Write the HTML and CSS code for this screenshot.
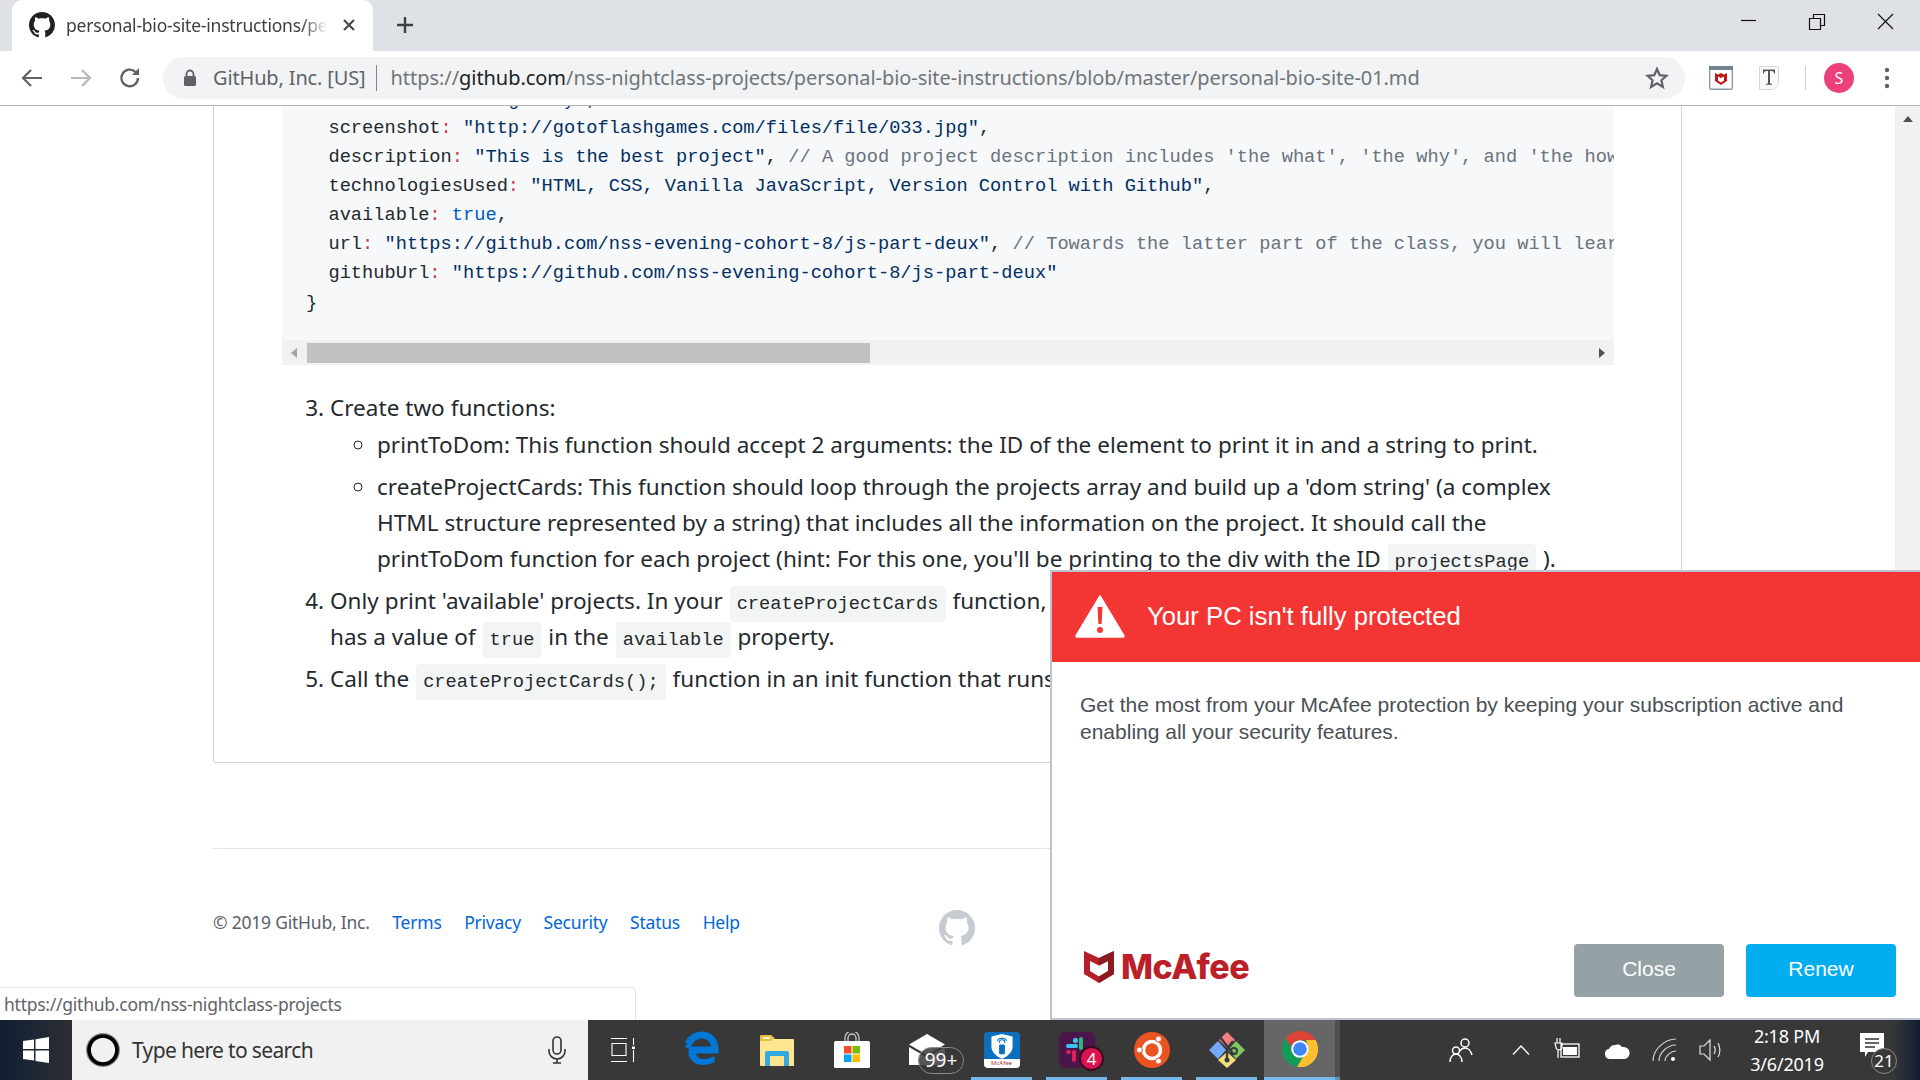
FILE: index.html
```html
<!DOCTYPE html>
<html lang="en">
<head>
<meta charset="utf-8">
<title>personal-bio-site-instructions</title>
<link rel="stylesheet" href="styles.css">
</head>
<body>
<svg class="defs" width="0" height="0">
  <symbol id="gh" viewBox="0 0 16 16"><path d="M8 0C3.58 0 0 3.58 0 8c0 3.54 2.29 6.53 5.47 7.59.4.07.55-.17.55-.38 0-.19-.01-.82-.01-1.49-2.01.37-2.53-.49-2.69-.94-.09-.23-.48-.94-.82-1.13-.28-.15-.68-.52-.01-.53.63-.01 1.08.58 1.23.82.72 1.21 1.87.87 2.33.66.07-.52.28-.87.51-1.07-1.78-.2-3.64-.89-3.64-3.95 0-.87.31-1.59.82-2.15-.08-.2-.36-1.02.08-2.12 0 0 .67-.21 2.2.82.64-.18 1.32-.27 2-.27.68 0 1.36.09 2 .27 1.53-1.04 2.2-.82 2.2-.82.44 1.1.16 1.92.08 2.12.51.56.82 1.27.82 2.15 0 3.07-1.87 3.75-3.65 3.95.29.25.54.73.54 1.48 0 1.07-.01 1.93-.01 2.2 0 .21.15.46.55.38A8.013 8.013 0 0 0 16 8c0-4.42-3.58-8-8-8z"/></symbol>
</svg>

<header class="tabstrip">
  <div class="tab">
    <svg class="tab-icon" width="26" height="26"><use href="#gh"/></svg>
    <span class="tab-title">personal-bio-site-instructions/personal-bio-site-01.md</span>
    <svg class="tab-close" width="14" height="14" viewBox="0 0 14 14"><path d="M2 2l10 10M12 2L2 12" stroke="#45494e" stroke-width="2.2"/></svg>
  </div>
  <svg class="newtab" width="20" height="20" viewBox="0 0 20 20"><path d="M10 2v16M2 10h16" stroke="#3c4043" stroke-width="2.4"/></svg>
  <div class="winctl">
    <svg width="68" height="50" viewBox="0 0 68 50"><path d="M25 20.500h15" stroke="#111" stroke-width="1.2"/></svg>
    <svg width="68" height="50" viewBox="0 0 68 50"><path d="M25.500 18.500h11v11h-11zM29.500 18.500v-4h11v11h-4" fill="none" stroke="#111" stroke-width="1.2"/></svg>
    <svg width="68" height="50" viewBox="0 0 68 50"><path d="M26 14l15 15M41 14L26 29" stroke="#111" stroke-width="1.2"/></svg>
  </div>
</header>

<nav class="toolbar">
  <svg class="tb-btn" width="24" height="24" viewBox="0 0 24 24"><path d="M22 12H4M11 4l-8 8 8 8" fill="none" stroke="#5f6368" stroke-width="2.2"/></svg>
  <svg class="tb-btn" width="24" height="24" viewBox="0 0 24 24"><path d="M2 12h18M13 4l8 8-8 8" fill="none" stroke="#b4b7bb" stroke-width="2.2"/></svg>
  <svg class="tb-btn" width="24" height="24" viewBox="0 0 24 24"><path d="M20 12a8.3 8.3 0 1 1-2.5-6" fill="none" stroke="#5f6368" stroke-width="2.3"/><path d="M21 2v7h-7z" fill="#5f6368"/></svg>
  <div class="omnibox">
    <svg class="lock" width="14" height="18" viewBox="0 0 14 18"><path d="M3.5 7V5a3.5 3.5 0 0 1 7 0v2" fill="none" stroke="#5f6368" stroke-width="1.8"/><rect x="1" y="7" width="12" height="10" rx="1.5" fill="#5f6368"/></svg>
    <span class="org">GitHub, Inc. [US]</span>
    <span class="omni-sep"></span>
    <span class="url">https://<b>github.com</b>/nss-nightclass-projects/personal-bio-site-instructions/blob/master/personal-bio-site-01.md</span>
    <svg class="star" width="24" height="24" viewBox="0 0 24 24"><path d="M12 3l2.7 6.2 6.8.6-5.1 4.5 1.5 6.6L12 17.4l-5.9 3.5 1.5-6.6-5.1-4.5 6.8-.6z" fill="none" stroke="#5f6368" stroke-width="2.2"/></svg>
  </div>
  <svg class="ext ext-m" width="24" height="24" viewBox="0 0 24 24"><rect x=".7" y=".7" width="22.6" height="22.6" rx="1.5" fill="#fff" stroke="#8a9aa5" stroke-width="1.4"/><rect x="0" y="0" width="24" height="4" fill="#71838f"/><path d="M6 7l3 1.6L12 7l3 1.6L18 7v8l-6 4-6-4z" fill="#c01818"/><path d="M9 10.5l3 1.5 3-1.5v4l-3 2-3-2z" fill="#fff"/></svg>
  <svg class="ext ext-t" width="20" height="24" viewBox="0 0 20 24"><path d="M.5.5h19v18l-5 5H.5z" fill="#fafafa" stroke="#d6d6d6"/><path d="M4 3.5h12v4h-1c0-1.6-1-2.4-3-2.4H11v12.2l2 .7v.8H7v-.8l2-.7V5.100H8C6 5.100 5 5.900 5 7.500H4z" fill="#555"/></svg>
  <span class="tb-sep"></span>
  <span class="avatar">S</span>
  <svg class="kebab" width="6" height="22" viewBox="0 0 6 22"><circle cx="3" cy="3" r="2.200" fill="#5f6368"/><circle cx="3" cy="11" r="2.200" fill="#5f6368"/><circle cx="3" cy="19" r="2.200" fill="#5f6368"/></svg>
</nav>

<div class="viewport">
  <main class="page">
    <article class="readme">
      <div class="code-wrap">
        <pre class="code"><span class="clip-line"><span class="clip-inner">  title<i class="p">:</i> <i class="s">"Cool Blog Body"</i>,</span></span>  screenshot<i class="p">:</i> <i class="s">"http://gotoflashgames.com/files/file/033.jpg"</i>,
  description<i class="p">:</i> <i class="s">"This is the best project"</i>, <i class="c">// A good project description includes 'the what', 'the why', and 'the how'</i>
  technologiesUsed<i class="p">:</i> <i class="s">"HTML, CSS, Vanilla JavaScript, Version Control with Github"</i>,
  available<i class="p">:</i> <i class="k">true</i>,
  url<i class="p">:</i> <i class="s">"https://github.com/nss-evening-cohort-8/js-part-deux"</i>, <i class="c">// Towards the latter part of the class, you will learn how to host</i>
  githubUrl<i class="p">:</i> <i class="s">"https://github.com/nss-evening-cohort-8/js-part-deux"</i>
}</pre>
        <div class="hscroll">
          <svg width="8" height="10" viewBox="0 0 8 10"><path d="M7 0v10L1 5z" fill="#a3a3a3"/></svg>
          <span class="hthumb"></span>
          <svg class="harrow-r" width="8" height="10" viewBox="0 0 8 10"><path d="M1 0v10l6-5z" fill="#505050"/></svg>
        </div>
      </div>
      <ol class="steps" start="3">
        <li>Create two functions:
          <ul>
            <li>printToDom: This function should accept 2 arguments: the ID of the element to print it in and a string to print.</li>
            <li>createProjectCards: This function should loop through the projects array and build up a 'dom string' (a complex<br>HTML structure represented by a string) that includes all the information on the project. It should call the<br>printToDom function for each project (hint: For this one, you'll be printing to the div with the ID <code>projectsPage</code> ).</li>
          </ul>
        </li>
        <li>Only print 'available' projects. In your <code>createProjectCards</code> function, only print a project if the project<br>has a value of <code>true</code> in the <code>available</code> property.</li>
        <li>Call the <code>createProjectCards();</code> function in an init function that runs when the page loads.</li>
      </ol>
    </article>
    <footer class="site-footer">
      <span class="copy">© 2019 GitHub, Inc.</span>
      <a>Terms</a><a>Privacy</a><a>Security</a><a>Status</a><a>Help</a>
      <svg class="foot-mark" width="36" height="36"><use href="#gh"/></svg>
    </footer>
  </main>
  <aside class="vscroll">
    <svg width="12" height="8" viewBox="0 0 12 8"><path d="M1 7l5-6 5 6z" fill="#505050"/></svg>
  </aside>
  <div class="status-bubble">https://github.com/nss-nightclass-projects</div>
</div>

<section class="popup">
  <div class="popup-head">
    <svg width="50" height="44" viewBox="0 0 50 44"><path d="M25 2L49 42a1 1 0 0 1-1 1H2a1 1 0 0 1-1-1z" fill="#fff" stroke="#fff" stroke-width="1.500" stroke-linejoin="round"/><path d="M22.500 13h5l-.9 17h-3.200z" fill="#f33633"/><circle cx="25" cy="36" r="3" fill="#f33633"/></svg>
    <h2>Your PC isn't fully protected</h2>
  </div>
  <p class="popup-body">Get the most from your McAfee protection by keeping your subscription active and<br>enabling all your security features.</p>
  <div class="popup-foot">
    <svg class="mc-shield" width="32" height="35" viewBox="0 0 32 35"><path d="M1 2l15 7 15-7v23L16 34 1 25z" fill="#b51f27"/><path d="M7 12l9 4.500 9-4.500v10l-9 5.500-9-5.500z" fill="#fff"/><path d="M16 9l15-7v23L16 34v-6.500l9-5.500V12l-9 4.500z" fill="#8c1a20"/></svg>
    <span class="mc-word">McAfee</span>
    <button class="btn btn-close">Close</button>
    <button class="btn btn-renew">Renew</button>
  </div>
</section>

<footer class="taskbar">
  <div class="start">
    <svg width="26" height="26" viewBox="0 0 26 26"><path d="M0 4l11-1.600V12H0zM12.500 2.200L26 0v12H12.500zM0 13.500h11v10L0 22zM12.500 13.500H26V26l-13.500-2z" fill="#fff"/></svg>
  </div>
  <div class="search">
    <svg width="36" height="36" viewBox="0 0 36 36"><circle cx="18" cy="18" r="14.500" fill="none" stroke="#8a8a8a" stroke-width="5"/><circle cx="18" cy="18" r="14" fill="none" stroke="#000" stroke-width="3.600"/></svg>
    <span class="search-text">Type here to search</span>
    <svg class="mic" width="18" height="28" viewBox="0 0 18 28"><rect x="5" y="1" width="8" height="17" rx="4" fill="none" stroke="#333" stroke-width="1.600"/><path d="M1 13v2a8 8 0 0 0 16 0v-2M9 23v4M5 27h8" fill="none" stroke="#333" stroke-width="1.600"/></svg>
  </div>
  <div class="tb-icons">
    <span class="tb-cell tb-task"><svg width="24" height="24" viewBox="0 0 24 24"><path d="M0 .5h16M0 23.500h16M1 5.500h14v12H1zM1 5.500M22.500 0v7M22.500 12v12" fill="none" stroke="#fff" stroke-width="1.100"/><rect x="21" y="8.500" width="3" height="2.500" fill="#fff"/></svg></span>
    <span class="tb-cell"><svg width="36" height="38" viewBox="0 0 36 38"><path d="M5 19h26C31 9 25 4 18 4 12 4 7 7 4 13" fill="none" stroke="#0078d7" stroke-width="7"/><path d="M4.500 19c-1 10 7 15 14 15 4 0 8-1 12-3v-6c-4 2-7 3-11 3-5 0-8-3-8-9z" fill="#0078d7"/><path d="M1 16c3-6 8-8 12-8-3 2-6 6-6 11z" fill="#0078d7"/></svg></span>
    <span class="tb-cell"><svg width="36" height="34" viewBox="0 0 36 34"><path d="M2 3h11l3 3h18a1 1 0 0 1 1 1v26H2a1 1 0 0 1-1-1V4z" fill="#ffe58f"/><path d="M1 3a1 1 0 0 1 1-1h10l3 3-3 3H1z" fill="#e9bd3f"/><path d="M4 4h7v2H4z" fill="#fff4c9"/><path d="M6 33V20a2 2 0 0 1 2-2h20a2 2 0 0 1 2 2v13h-5V23H11v10z" fill="#34a8e0"/></svg></span>
    <span class="tb-cell"><svg width="36" height="36" viewBox="0 0 36 36"><rect x="0" y="9" width="36" height="27" rx="1.500" fill="#fff"/><path d="M11 9V6a7 7 0 0 1 14 0v3M14 9V6a4 4 0 0 1 8 0v3" fill="none" stroke="#c9c9c9" stroke-width="1.300"/><rect x="10" y="14" width="7.500" height="7.500" fill="#f25022"/><rect x="18.500" y="14" width="7.500" height="7.500" fill="#7fba00"/><rect x="10" y="22.500" width="7.500" height="7.500" fill="#00a4ef"/><rect x="18.500" y="22.500" width="7.500" height="7.500" fill="#ffb900"/></svg></span>
    <span class="tb-cell tb-badged"><svg width="36" height="32" viewBox="0 0 36 32"><path d="M0 10.500L18 0l18 10.500L18 21z" fill="#fff"/><path d="M0 13l18 10.500L36 13v18H0z" fill="#fff"/></svg><span class="badge-99">99+</span></span>
    <span class="tb-cell tb-on"><span class="vpn"><svg width="22" height="26" viewBox="0 0 22 26"><path d="M11 0l11 2.500V13c0 6-5 10-11 13C5 23 0 19 0 13V2.500z" fill="#fff"/><path d="M8 9a3 3 0 0 1 6 0M6 7a6 6 0 0 1 10 0" fill="none" stroke="#0b6fc0" stroke-width="1.200"/><rect x="8" y="11" width="6" height="10" rx="1" fill="#0b6fc0"/></svg><span class="vpn-foot">McAfee</span></span></span>
    <span class="tb-cell tb-on tb-badged"><svg width="36" height="36" viewBox="0 0 36 36"><rect width="36" height="36" rx="6" fill="#4a154b"/><rect x="7" y="12" width="12" height="4" rx="2" fill="#36c5f0"/><rect x="14" y="6" width="5" height="5" rx="2" fill="#36c5f0"/><rect x="20" y="5" width="4" height="13" rx="2" fill="#2eb67d"/><rect x="7" y="18" width="5" height="4" rx="2" fill="#e01e5a"/><rect x="13" y="18" width="4" height="12" rx="2" fill="#e01e5a"/></svg><span class="badge-4">4</span></span>
    <span class="tb-cell tb-on"><svg width="36" height="36" viewBox="0 0 36 36"><circle cx="18" cy="18" r="18" fill="#e95420"/><circle cx="18" cy="18" r="8.500" fill="none" stroke="#fff" stroke-width="3.600"/><circle cx="24.500" cy="7" r="3" fill="#fff" stroke="#e95420"/><circle cx="24.500" cy="29" r="3" fill="#fff" stroke="#e95420"/><circle cx="5.500" cy="18" r="3" fill="#fff" stroke="#e95420"/></svg></span>
    <span class="tb-cell tb-on"><svg width="38" height="38" viewBox="0 0 38 38"><path d="M19 1l8 8-8 8-8-8z" fill="#f47f7f"/><path d="M28 10l9 9-9 9-8-9z" fill="#82c662"/><path d="M19 21l9 8-9 8-9-8z" fill="#f6de7c"/><path d="M10 10l8 9-8 9-9-9z" fill="#73a9f7"/><path d="M12 6l14 18M25 10l-6 8M19 20v10" stroke="#3a3a3a" stroke-width="2.400" fill="none"/><circle cx="26" cy="20" r="3" fill="none" stroke="#3a3a3a" stroke-width="2"/><circle cx="19" cy="29" r="2.500" fill="#3a3a3a"/></svg></span>
    <span class="tb-chrome"><svg width="36" height="36" viewBox="0 0 36 36"><path d="M18 0a18 18 0 0 1 15.600 9H18a9 9 0 0 0-8.500 6L3.500 7.500A18 18 0 0 1 18 0z" fill="#db4437"/><path d="M3.500 7.500l7.200 12.200a8 8 0 0 0 10 6.500L15 36A18 18 0 0 1 3.500 7.500z" fill="#0f9d58"/><path d="M33.600 9A18 18 0 0 1 15 36l7-11.500A8 8 0 0 0 25.500 13 L24 9z" fill="#fbc02d"/><circle cx="18" cy="18" r="8.800" fill="#fff"/><circle cx="18" cy="18" r="6.800" fill="#4285f4"/></svg></span>
    <span class="tb-chrome-edge"></span>
  </div>
  <div class="tray">
    <svg class="t-people" width="26" height="26" viewBox="0 0 26 26"><g fill="none" stroke="#fff" stroke-width="1.500"><circle cx="17" cy="6" r="4"/><path d="M12 14c1-2 3-3 5-3 3 0 6 3 7 7"/><circle cx="8" cy="13.500" r="3.500"/><path d="M2 25c0-5 3-8 6-8s6 3 6 8"/></g></svg>
    <svg class="t-chev" width="18" height="10" viewBox="0 0 18 10"><path d="M1 9.500L9 1l8 8.500" fill="none" stroke="#fff" stroke-width="1.300"/></svg>
    <svg class="t-batt" width="26" height="24" viewBox="0 0 26 24"><rect x="7" y="6" width="18" height="13" fill="none" stroke="#fff" stroke-width="1.300"/><rect x="9" y="9" width="14" height="8" fill="#fff"/><path d="M3 0v5M6 0v5M1 5h7v4a3 3 0 0 1-6 0zM4 12v8" fill="none" stroke="#fff" stroke-width="1.200"/></svg>
    <svg class="t-cloud" width="26" height="18" viewBox="0 0 26 18"><path d="M6 18a5 5 0 0 1-1-9.900 7 7 0 0 1 6-4 5 5 0 0 1 7 2A5.500 5.500 0 0 1 21 18z" fill="#fff"/></svg>
    <svg class="t-wifi" width="26" height="24" viewBox="0 0 26 24"><g fill="none" stroke="#cfcfcf" stroke-width="1.200"><path d="M1 23C1 12 12 1 24 1"/><path d="M7 23C7 15 15 7 24 7"/><path d="M13 23c0-5 6-10 11-10"/></g><circle cx="21" cy="21" r="2" fill="#fff"/></svg>
    <svg class="t-vol" width="24" height="24" viewBox="0 0 24 24"><g fill="none" stroke="#e0e0e0" stroke-width="1.200"><path d="M1 8h4l6-6v20l-6-6H1z"/><path d="M15 8c1.500 2.500 1.500 5.500 0 8M19 5c2.500 4 2.500 10 0 14"/></g></svg>
    <div class="clock"><span>2:18 PM</span><span>3/6/2019</span></div>
    <span class="notif"><svg width="26" height="26" viewBox="0 0 26 26"><path d="M1 1h24v19H9l-3 5v-5H1z" fill="#fff"/><path d="M6 7h14M6 11h14M6 15h10" stroke="#333" stroke-width="1.300"/></svg><span class="badge-21">21</span></span>
  </div>
</footer>
</body>
</html>
```

FILE: styles.css
```css
* { box-sizing: border-box; }
html, body { margin: 0; padding: 0; }
body {
  width: 1920px;
  height: 1080px;
  overflow: hidden;
  display: flex;
  flex-direction: column;
  position: relative;
  background: #fff;
  font-family: "Noto Sans", "Open Sans", sans-serif;
  color: #24292e;
}
.defs { position: absolute; }

/* tab strip */
.tabstrip {
  height: 51px;
  flex: none;
  display: flex;
  align-items: flex-start;
  background: #dee1e6;
  padding-left: 12px;
}
.tab {
  width: 361px;
  height: 51px;
  background: #fff;
  border-radius: 10px 10px 0 0;
  display: flex;
  align-items: center;
  padding: 0 17px 2px 17px;
}
.tab-icon { flex: none; fill: #202124; }
.tab-title {
  flex: 1;
  width: 0;
  margin-left: 11px;
  font-size: 17.5px;
  letter-spacing: -0.2px;
  color: #3c4043;
  white-space: nowrap;
  overflow: hidden;
  -webkit-mask-image: linear-gradient(to right, #000 90%, transparent 100%);
  mask-image: linear-gradient(to right, #000 90%, transparent 100%);
}
.tab-close { flex: none; margin-left: 14px; }
.newtab { margin: 15px 0 0 22px; }
.winctl { margin-left: auto; display: flex; }

/* toolbar */
.toolbar {
  height: 55px;
  flex: none;
  display: flex;
  align-items: center;
  border-bottom: 1px solid #b5b5b5;
  padding-left: 20px;
  padding-bottom: 1px;
}
.tb-btn { flex: none; margin-right: 25px; }
.omnibox {
  width: 1522px;
  height: 42px;
  margin-left: -4px;
  flex: none;
  border-radius: 21px;
  background: #f1f3f4;
  display: flex;
  align-items: center;
  padding-left: 20px;
  font-size: 20px;
  color: #5f6368;
}
.org { margin-left: 16px; white-space: nowrap; letter-spacing: -0.15px; }
.omni-sep { width: 1px; height: 26px; background: #80868b; margin: 0 14px 0 10px; }
.url { white-space: nowrap; color: #70757a; letter-spacing: -0.05px; }
.url b { font-weight: 400; color: #202124; }
.star { margin-left: auto; margin-right: 16px; }
.ext-m { margin-left: 24px; }
.ext-t { margin-left: 26px; }
.tb-sep { width: 1px; height: 24px; background: #d4d4d4; margin-left: 26px; }
.avatar {
  width: 30px;
  height: 30px;
  border-radius: 50%;
  background: #ec407a;
  color: #fff;
  font-size: 16px;
  display: flex;
  align-items: center;
  justify-content: center;
  margin-left: 18px;
}
.kebab { margin-left: 30px; }

/* page */
.viewport {
  flex: 1;
  min-height: 0;
  display: flex;
  position: relative;
  overflow: hidden;
}
.page { flex: 1; padding-left: 213px; overflow: hidden; }
.readme {
  width: 1469px;
  height: 657px;
  border: 1px solid #d1d5da;
  border-top: 0;
  padding: 0 67px 0 68px;
  border-radius: 0 0 3px 3px;
}
.code-wrap { background: #f6f8fa; overflow: hidden; }
.code {
  margin: 0;
  height: 234px;
  padding-left: 24px;
  overflow: hidden;
  font-family: "Liberation Mono", "DejaVu Sans Mono", monospace;
  font-size: 18.7px;
  line-height: 29.1px;
  white-space: pre;
  color: #24292e;
}
.clip-line { display: block; height: 8px; overflow: hidden; }
.clip-inner { display: block; margin-top: -20px; }
.code i { font-style: normal; }
.code .p { color: #d73a49; }
.code .s { color: #032f62; }
.code .c { color: #6a737d; }
.code .k { color: #005cc5; }
.hscroll {
  height: 25px;
  background: #f1f1f1;
  display: flex;
  align-items: center;
  padding: 0 8px;
}
.hthumb { width: 563px; height: 20px; background: #c1c1c1; margin-left: 9px; }
.harrow-r { margin-left: auto; }

.steps {
  margin: 25px 0 0;
  padding: 0 0 0 48px;
  font-size: 22.5px;
  letter-spacing: 0.03px;
  line-height: 36px;
  color: #24292e;
}
.steps > li + li { margin-top: 6px; }
.steps ul { margin: 1px 0 0; padding-left: 47px; list-style: circle; }
.steps ul li + li { margin-top: 6px; }
.steps code {
  font-family: "Liberation Mono", "DejaVu Sans Mono", monospace;
  font-size: 18.7px;
  letter-spacing: 0;
  line-height: 1;
  background: #f3f4f4;
  border-radius: 4px;
  padding: 7px 7px;
  margin: 0 1px;
}

.site-footer {
  width: 1468px;
  margin-top: 85px;
  border-top: 1px solid #e1e4e8;
  padding-top: 59px;
  height: 120px;
  display: flex;
  align-items: flex-start;
  font-size: 17.5px;
  letter-spacing: -0.22px;
  line-height: 28px;
  color: #586069;
}
.site-footer a { color: #0366d6; margin-left: 22.6px; }
.foot-mark { fill: #c6cbd1; margin: 2px 0 0 199px; }

.vscroll {
  width: 25px;
  flex: none;
  background: #f1f1f1;
  display: flex;
  justify-content: center;
  align-items: flex-start;
  padding-top: 9px;
}
.status-bubble {
  position: absolute;
  left: 0;
  bottom: 0;
  width: 636px;
  height: 33px;
  padding-left: 4px;
  background: #fff;
  border-top: 1px solid #e4e4e4;
  border-right: 1px solid #e4e4e4;
  border-top-right-radius: 5px;
  font-size: 17.5px;
  letter-spacing: -0.25px;
  line-height: 32px;
  color: #5f6368;
}

/* McAfee popup */
.popup {
  position: absolute;
  left: 1050px;
  top: 570px;
  right: 0;
  height: 450px;
  background: #fff;
  border: 2px solid #bdc3d0;
  border-right: 0;
  display: flex;
  flex-direction: column;
  font-family: "Liberation Sans", Arial, sans-serif;
}
.popup-head {
  height: 90px;
  background: #f33633;
  display: flex;
  align-items: center;
  padding: 0 0 3px 23px;
}
.popup-head h2 {
  margin: 2px 0 0 22px;
  font-size: 25.7px;
  font-weight: 400;
  color: #fff;
}
.popup-body {
  margin: 29px 0 0;
  padding-left: 28px;
  font-size: 21px;
  line-height: 27px;
  color: #4a4f55;
}
.popup-foot {
  margin-top: auto;
  display: flex;
  align-items: center;
  padding: 0 24px 21px 31px;
}
.mc-shield { margin-bottom: 9px; }
.mc-word {
  margin: 0 0 9px 6px;
  font-family: "Inter", "Noto Sans", sans-serif;
  font-weight: 800;
  font-size: 34px;
  letter-spacing: -0.5px;
  color: #bb1f28;
}
.btn {
  width: 150px;
  height: 53px;
  border: 0;
  border-radius: 4px;
  color: #fff;
  font-family: "Liberation Sans", Arial, sans-serif;
  font-size: 21px;
  padding: 0 0 4px;
}
.btn-close { background: #95a1a5; margin-left: auto; }
.btn-renew { background: #00aeef; margin-left: 22px; }

/* taskbar */
.taskbar {
  height: 60px;
  flex: none;
  display: flex;
  align-items: stretch;
  background: #383838;
  color: #fff;
}
.start {
  width: 72px;
  background: linear-gradient(to right, #121e35, #2c2e34);
  display: flex;
  align-items: center;
  justify-content: center;
}
.search {
  width: 516px;
  background: #f1f1f1;
  display: flex;
  align-items: center;
  padding: 0 16px 0 13px;
  color: #333;
}
.search-text { font-size: 21px; letter-spacing: -0.65px; margin-left: 11px; }
.mic { margin-left: auto; margin-right: 6px; }
.tb-icons { display: flex; align-items: stretch; }
.tb-cell {
  width: 75px;
  display: flex;
  align-items: center;
  justify-content: center;
  position: relative;
}
.tb-task { width: 76px; padding-right: 6px; }
.tb-on::after {
  content: "";
  position: absolute;
  left: 7px;
  right: 7px;
  bottom: 0;
  height: 3px;
  background: #76b9ed;
}
.tb-chrome {
  width: 71px;
  background: #666;
  border-bottom: 3px solid #76b9ed;
  display: flex;
  align-items: center;
  justify-content: center;
}
.tb-chrome-edge { width: 5px; background: #4f4f4f; border-bottom: 3px solid #5e93bd; }
.badge-99 {
  position: absolute;
  left: 29px;
  top: 27px;
  width: 46px;
  height: 27px;
  border-radius: 14px;
  border: 1px solid #8a8a8a;
  background: rgba(56, 56, 56, .85);
  color: #fff;
  font-size: 19px;
  line-height: 24px;
  text-align: center;
}
.badge-4 {
  position: absolute;
  left: 40px;
  top: 26px;
  width: 25px;
  height: 25px;
  border-radius: 50%;
  background: #d9134f;
  border: 2px solid #3d0a22;
  color: #fff;
  font-size: 17px;
  line-height: 21px;
  text-align: center;
}
.vpn {
  width: 36px;
  height: 36px;
  border-radius: 4px;
  overflow: hidden;
  background: #0b6fc0;
  display: flex;
  flex-direction: column;
  align-items: center;
  padding-top: 2px;
}
.vpn-foot {
  margin-top: auto;
  width: 100%;
  height: 9px;
  background: #fff;
  color: #a33;
  font-size: 6px;
  line-height: 9px;
  text-align: center;
}
.tray {
  margin-left: auto;
  display: flex;
  align-items: center;
  position: relative;
  background: linear-gradient(to right, #383838 94%, #1f2636 98%, #141c30);
  padding-right: 31px;
}
.t-chev { margin-left: 38px; }
.t-batt { margin-left: 24px; }
.t-cloud { margin-left: 24px; }
.t-wifi { margin-left: 22px; }
.t-vol { margin-left: 21px; }
.clock {
  margin-left: 20px;
  display: flex;
  flex-direction: column;
  align-items: center;
  gap: 5px;
  font-size: 18px;
  letter-spacing: -0.2px;
  line-height: 23px;
  width: 88px;
}
.notif { position: relative; margin-left: 28px; width: 30px; height: 36px; display: flex; }
.badge-21 {
  position: absolute;
  left: 12px;
  top: 16px;
  width: 26px;
  height: 26px;
  border-radius: 50%;
  border: 1px solid #8a8a8a;
  background: #383838;
  color: #fff;
  font-size: 17px;
  line-height: 23px;
  text-align: center;
}
```
